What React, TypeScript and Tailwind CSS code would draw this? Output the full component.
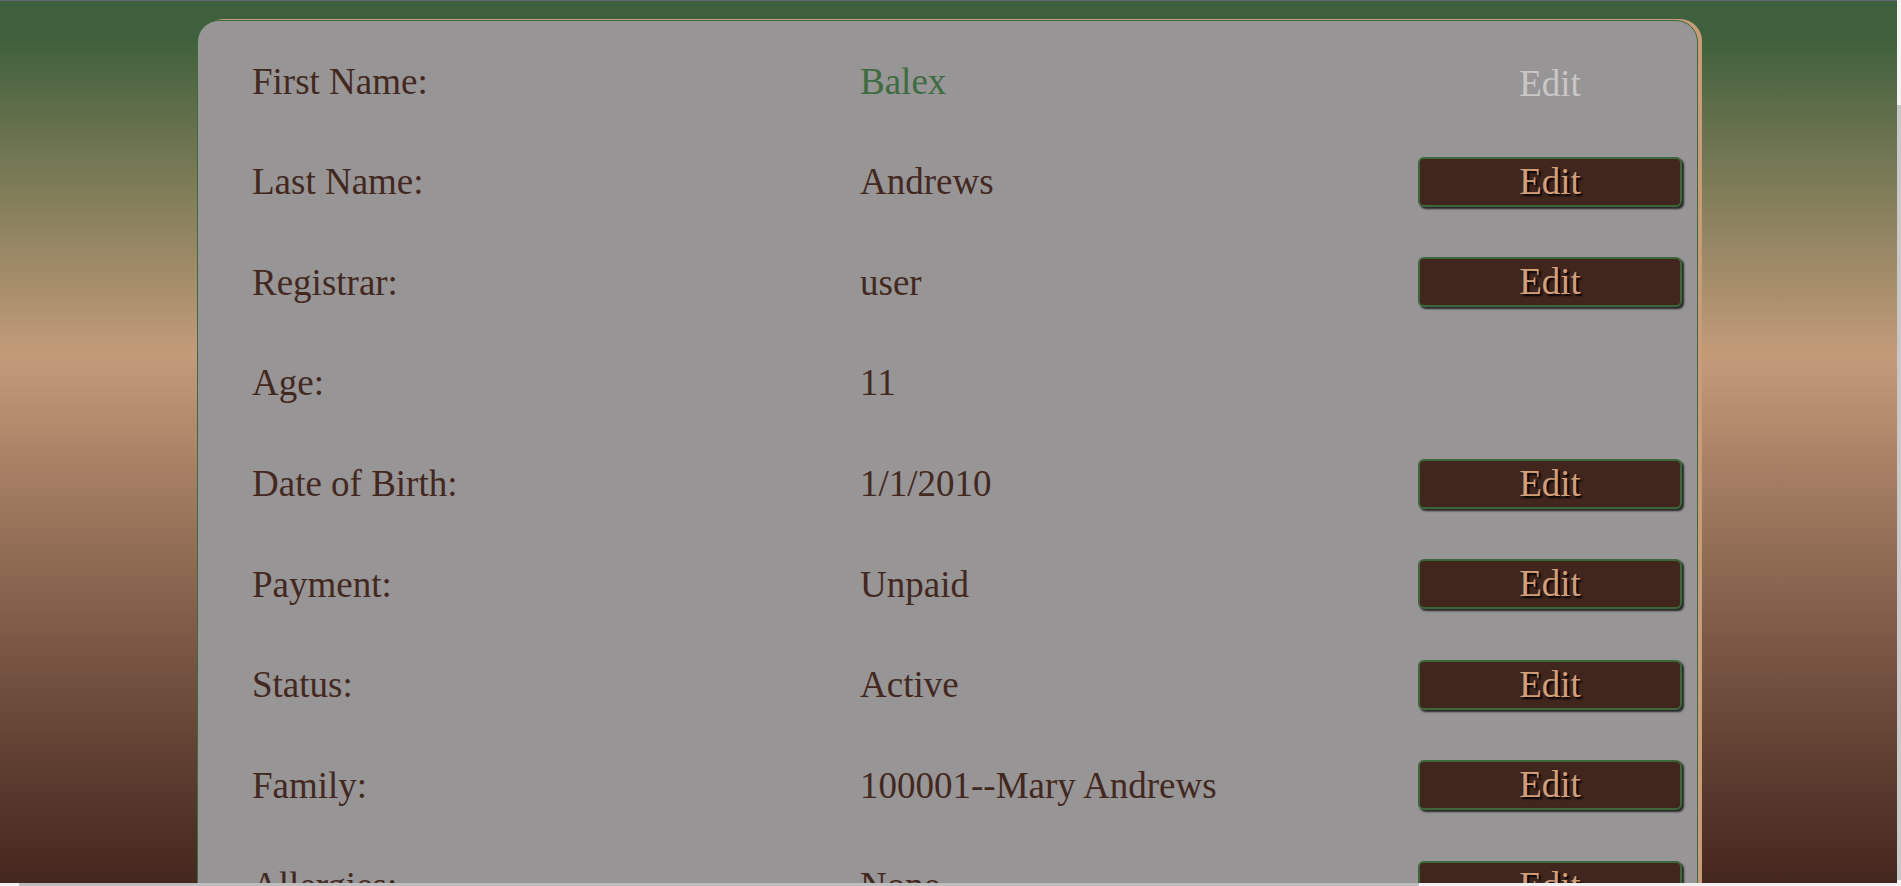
import React from 'react';

type Row = { label: string; value: string; edit: 'on' | 'off' | 'none'; green?: boolean };

const rows: Row[] = [
    { label: 'First Name:', value: 'Balex', edit: 'off', green: true },
    { label: 'Last Name:', value: 'Andrews', edit: 'on' },
    { label: 'Registrar:', value: 'user', edit: 'on' },
    { label: 'Age:', value: '11', edit: 'none' },
    { label: 'Date of Birth:', value: '1/1/2010', edit: 'on' },
    { label: 'Payment:', value: 'Unpaid', edit: 'on' },
    { label: 'Status:', value: 'Active', edit: 'on' },
    { label: 'Family:', value: '100001--Mary Andrews', edit: 'on' },
    { label: 'Allergies:', value: 'None', edit: 'on' },
];

function EditButton({ kind }: { kind: Row['edit'] }) {
    if (kind === 'none') return <div />;
    if (kind === 'off') {
        return (
            <button disabled className="h-[50px] w-[264px] pb-[2px] text-[#c9c7c7]">
                Edit
            </button>
        );
    }
    return (
        <button className="h-[50px] w-[264px] rounded-[6px] border-2 border-[#3d673b] bg-[#41261e] pb-[1px] leading-none text-[#d29f7b] shadow-[2px_2px_2px_rgba(0,0,0,0.75)] [text-shadow:2px_2px_2px_#000]">
            Edit
        </button>
    );
}

export default function App() {
    return (
        <div className="relative h-[886px] overflow-hidden border-t border-[#5d6a75] bg-linear-to-b from-[#3f603c] from-[4%] via-[#c49b79] via-[40%] to-[#43261e] font-['Liberation_Serif',serif] text-[37px] text-[#43281f]">
            <div className="ml-[197px] mt-[19px] w-[1501px] rounded-[22px] border border-[#3c6a3c] bg-[#979596] pt-[10px] pr-[15px] pl-[54px] shadow-[4px_-1px_0_#c89c78]">
                {rows.map((r) => (
                    <div key={r.label} className="grid h-[100.6px] grid-cols-[608px_1fr_264px] items-center">
                        <span>{r.label}</span>
                        <span className={r.green ? 'text-[#3f6b40]' : ''}>{r.value}</span>
                        <EditButton kind={r.edit} />
                    </div>
                ))}
            </div>

            {/* thin scrollbars */}
            <div className="fixed top-0 right-0 h-full w-[4px] bg-[#f4f4f4]">
                <div className="mt-[105px] h-[775px] w-full bg-[#c8c8c8]" />
            </div>
            <div className="fixed bottom-0 left-0 h-[3px] w-[1897px] bg-[#f1f1f1]">
                <div className="ml-[19px] h-full w-[1400px] bg-[#bdbdbd]" />
            </div>
        </div>
    );
}
